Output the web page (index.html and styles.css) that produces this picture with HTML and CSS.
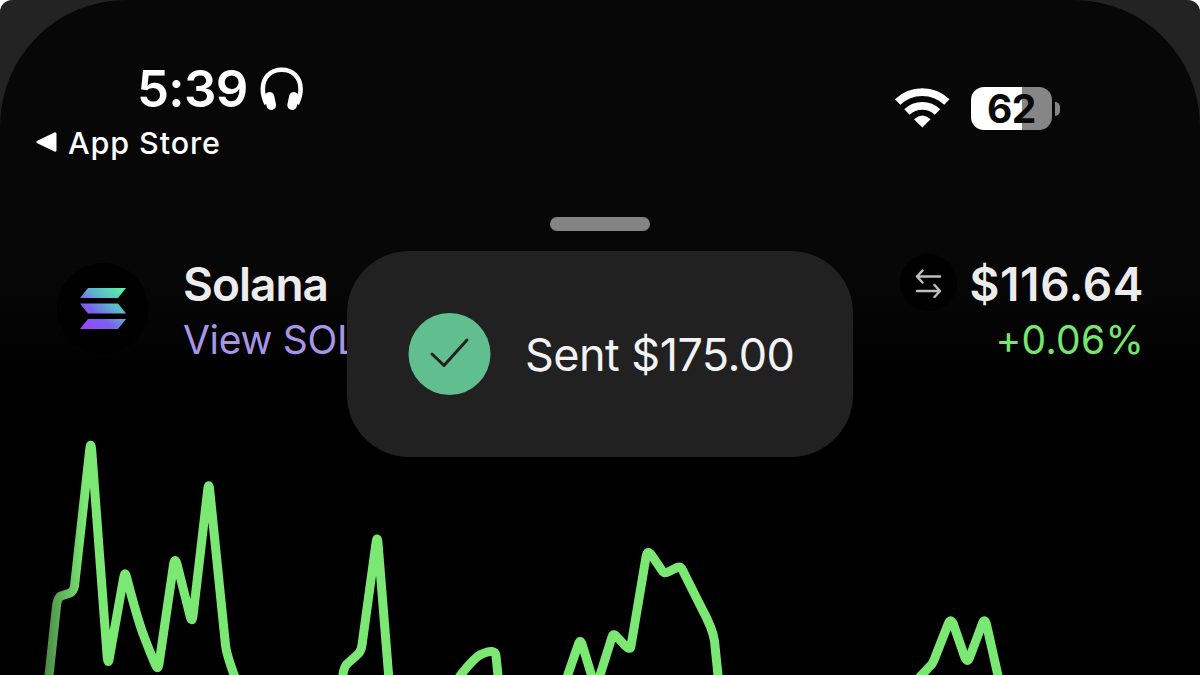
FILE: index.html
```
<!DOCTYPE html>
<html lang="en">
<head>
  <meta charset="UTF-8">
  <meta name="viewport" content="width=device-width, initial-scale=1.0">
  <title>Solana</title>
  <link rel="stylesheet" href="styles.css">
</head>
<body>

  <div class="backdrop">
    <div class="phone">

      <div class="status-bar">
        <div class="status-left">
          <div class="clock">
            <span class="time">5:39</span>
            <svg class="headphones" width="44" height="44" viewBox="0 0 44 44">
              <path d="M6.500 37C4 31.500 2.800 28 2.800 22C2.800 9.800 11 2.800 21.700 2.800S40.600 9.800 40.600 22C40.600 28 39.400 31.500 36.900 37" fill="none" stroke="#fff" stroke-width="4.600"/>
              <rect x="5.600" y="25" width="9.600" height="18" rx="4.600" transform="rotate(-12 10.400 34)" fill="#fff"/>
              <rect x="28.200" y="25" width="9.600" height="18" rx="4.600" transform="rotate(12 33 34)" fill="#fff"/>
            </svg>
          </div>
          <div class="back-link">
            <svg width="21" height="20" viewBox="0 0 21 20">
              <path d="M2 10L19 1.800V18.200Z" fill="#fff" stroke="#fff" stroke-width="3" stroke-linejoin="round"/>
            </svg>
            <span class="back-text">App Store</span>
          </div>
        </div>

        <div class="status-right">
          <svg class="wifi" width="56" height="41" viewBox="0 0 56 41">
            <g fill="none" stroke="#fff" stroke-width="7.800">
              <path d="M3.600 14A35.500 35.500 0 0 1 52.900 14"/>
              <path d="M13 24A22 22 0 0 1 43.500 24"/>
            </g>
            <path d="M28.300 39.500L20 31.200Q28.300 24 36.600 31.200Z" fill="#fff"/>
          </svg>
          <div class="battery">
            <div class="battery-body"><span class="battery-text">62</span></div>
            <div class="battery-cap"></div>
          </div>
        </div>
      </div>

      <div class="handle"></div>

      <div class="token-row">
        <div class="token-logo">
          <svg width="46" height="41" viewBox="0 0 46 41">
            <defs>
              <linearGradient id="sol" gradientUnits="userSpaceOnUse" x1="6" y1="42" x2="40" y2="0">
                <stop offset="0" stop-color="#9a45ff"/>
                <stop offset="0.35" stop-color="#7b60ee"/>
                <stop offset="0.65" stop-color="#5cb8cd"/>
                <stop offset="1" stop-color="#5cefa8"/>
              </linearGradient>
            </defs>
            <g fill="url(#sol)">
              <path d="M8 0H46L38 10H0Z"/>
              <path d="M0 15.500H38L46 25.500H8Z"/>
              <path d="M8 31H46L38 41H0Z"/>
            </g>
          </svg>
        </div>
        <div class="token-info">
          <div class="token-name">Solana</div>
          <div class="token-link">View SOL</div>
        </div>
        <div class="swap">
          <svg width="27" height="30" viewBox="0 0 27 30">
            <g fill="none" stroke="#bdbdbd" stroke-width="2.500" stroke-linecap="round" stroke-linejoin="round">
              <path d="M25 8.500H2M7.500 2.500L2 8.500L7.500 14.500"/>
              <path d="M2 23H25M19.500 17L25 23L19.500 29"/>
            </g>
          </svg>
        </div>
        <div class="token-price">
          <div class="price">$116.64</div>
          <div class="change">+0.06%</div>
        </div>
      </div>

      <svg class="chart" width="1200" height="275" viewBox="0 400 1200 275">
        <defs>
          <linearGradient id="fade" gradientUnits="userSpaceOnUse" x1="40" y1="0" x2="84" y2="0">
            <stop offset="0" stop-color="#457f42"/>
            <stop offset="1" stop-color="#7ae873"/>
          </linearGradient>
        </defs>
        <g fill="none" stroke="url(#fade)" stroke-width="9" stroke-linejoin="round">
          <path d="M48.500 680L56.500 606Q57.500 597.500 61 596L70 593Q73.500 591.500 74.500 586L89.700 450Q90.700 440.500 91.700 450L107.200 657Q108.300 666 109.500 657L123.800 577Q125 570.500 126.500 577Q138 621 143.500 635Q149 650 155.500 665Q157.800 671 159 664L173.800 563Q175.200 557.500 177 564L190.300 617Q192 623 193 616L207.700 490Q208.700 481.500 209.700 490L225.500 645Q226.500 655 236 680"/>
          <path d="M342.500 680Q343 668 347 664L357 655Q361 652 362 645L376 543Q377.200 535 378 543L389 680"/>
          <path d="M457 680Q474 657 482 654Q495 648 496 656L498.500 680"/>
          <path d="M566 680L578.500 644Q580 639 582 644L593 680M598.500 680L612 637Q613.500 632.500 617 637L624.500 645Q630 651 631 646L646 557Q647.300 549 651.500 555L661 569Q664 574.500 668 572L677 567.500Q681 565.500 683 571L701 607Q713 629 714.500 641L718.500 680"/>
          <path d="M917 680L932 664Q934 661 936 655L948 624.500Q950.500 617 953.500 624.500L964.500 656.500Q967.500 664.500 970 656.500L982 624.500Q984.500 617 986.500 624.500L999 680"/>
        </g>
      </svg>

      <div class="toast">
        <svg width="83" height="83" viewBox="0 0 83 83">
          <circle cx="41.500" cy="41" r="41" fill="#61bf8f"/>
          <path d="M24 41L36 52.500L59 27" fill="none" stroke="#212121" stroke-width="3" stroke-linecap="round" stroke-linejoin="round"/>
        </svg>
        <span class="toast-text">Sent $175.00</span>
      </div>

    </div>
  </div>

</body>
</html>
```
FILE: styles.css
```
* {
  box-sizing: border-box;
}

body {
  margin: 0;
  background: #ffffff;
  font-family: 'Inter', 'Liberation Sans', sans-serif;
  color: #ffffff;
  overflow: hidden;
}

.backdrop {
  width: 1200px;
  height: 675px;
  background: #232323;
  border-radius: 12px 12px 0 0;
  overflow: hidden;
}

.phone {
  position: relative;
  display: flex;
  flex-direction: column;
  height: 675px;
  background: linear-gradient(#070707 0, #070707 270px, #000000 390px);
  border-radius: 126px 126px 0 0;
  overflow: hidden;
}

.status-bar {
  display: flex;
  justify-content: space-between;
  height: 217px;
  padding: 66px 140px 0 36px;
}

.clock {
  display: flex;
  align-items: center;
  gap: 13px;
  height: 46px;
  padding-left: 101px;
}

.time {
  width: 110px;
  font-size: 51px;
  font-weight: 600;
  line-height: 46px;
  letter-spacing: -0.7px;
  white-space: nowrap;
}

.back-link {
  display: flex;
  align-items: center;
  gap: 11px;
  height: 40px;
  margin-top: 10px;
}

.back-text {
  font-size: 30.5px;
  font-weight: 500;
  letter-spacing: 0.9px;
}

.status-right {
  display: flex;
  align-items: center;
  gap: 21px;
  height: 85px;
}

.battery {
  display: flex;
  align-items: center;
  gap: 3px;
}

.battery-body {
  display: flex;
  align-items: center;
  justify-content: center;
  width: 81px;
  height: 43px;
  border-radius: 13px;
  background: linear-gradient(90deg, #ffffff 62.5%, #868686 62.5%);
}

.battery-text {
  font-size: 39px;
  font-weight: 700;
  letter-spacing: -0.5px;
  color: #090909;
}

.battery-cap {
  width: 5px;
  height: 14px;
  border-radius: 0 5px 5px 0;
  background: #868686;
}

.handle {
  align-self: center;
  width: 100px;
  height: 14px;
  border-radius: 7px;
  background: #848484;
}

.token-row {
  display: flex;
  height: 169px;
  padding: 32px 56px 0 57px;
}

.token-logo {
  display: flex;
  align-items: center;
  justify-content: center;
  width: 91px;
  height: 91px;
  border-radius: 50%;
  background: #000000;
}

.token-info {
  flex: 1;
  margin-left: 35px;
}

.token-name,
.price {
  height: 43px;
  font-size: 46px;
  font-weight: 600;
  line-height: 43px;
  color: #ececec;
}

.token-name {
  letter-spacing: -1px;
}

.price {
  letter-spacing: 0.6px;
}

.token-link,
.change {
  margin-top: 10px;
  font-size: 39px;
  line-height: 48px;
}

.token-link {
  letter-spacing: -0.3px;
  color: #a795e8;
}

.swap {
  display: flex;
  align-items: center;
  justify-content: center;
  width: 57px;
  height: 57px;
  margin: -9px 13px 0 0;
  border-radius: 50%;
  background: #000000;
}

.token-price {
  text-align: right;
}

.change {
  letter-spacing: 0.3px;
  color: #77e670;
}

.chart {
  display: block;
}

/* floats over the token header */
.toast {
  position: absolute;
  top: 251px;
  left: 347px;
  display: flex;
  align-items: center;
  gap: 34px;
  width: 506px;
  height: 206px;
  padding-left: 61px;
  border-radius: 62px;
  background: #212121;
}

.toast-text {
  font-size: 45px;
  letter-spacing: -0.55px;
  white-space: nowrap;
  color: #f2f2f2;
}
```
